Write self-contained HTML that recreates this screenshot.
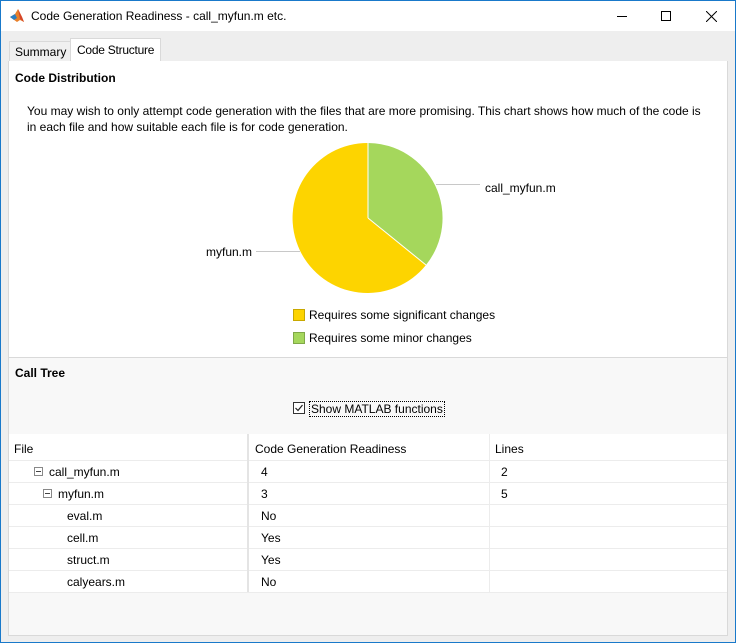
<!DOCTYPE html>
<html><head><meta charset="utf-8"><style>
*{margin:0;padding:0;box-sizing:border-box}
body{width:736px;height:643px;overflow:hidden;background:#eeeeee;font-family:"Liberation Sans",sans-serif;font-size:12px;color:#000;position:relative}
.abs{position:absolute}
#win{position:absolute;left:0;top:0;width:736px;height:643px;border:1px solid #1979ca;border-top:none}
#title{position:absolute;left:0;top:0;width:736px;height:31px;background:#fff;border-top:1px solid #1979ca}
.t{position:absolute;white-space:nowrap}
.b{font-weight:bold}
.row{position:absolute;left:9px;width:718px;height:22px;background:#fff;border-bottom:1px solid #ececec}
.vl{position:absolute;top:434px;width:1px;height:158px;background:#ececec}
</style></head><body>
<div id="title">
<svg class="abs" style="left:9px;top:7px" width="16" height="16" viewBox="0 0 16 16"><path d="M1 9 L6 6 L9 1 L13 9 L15 14 L11 12 L8 14 Z" fill="#e8802a"/><path d="M1 9 L6 6 L8 10 L5 12 Z" fill="#2a7fc4"/><path d="M9 1 L13 9 L15 14 L11 11Z" fill="#d6462a"/></svg>
<div class="t" style="left:31px;top:8px;font-size:12px">Code Generation Readiness - call_myfun.m etc.</div>
<div class="abs" style="left:617px;top:15px;width:10px;height:1px;background:#000"></div>
<div class="abs" style="left:661px;top:10px;width:10px;height:10px;border:1px solid #000"></div>
<svg class="abs" style="left:706px;top:10px" width="11" height="11"><path d="M0 0L11 11M11 0L0 11" stroke="#000" stroke-width="1"/></svg>
</div>
<!-- tabs -->
<div class="abs" style="left:9px;top:41px;width:62px;height:21px;border:1px solid #d9d9d9;border-bottom:none;background:#f0f0f0"></div>
<div class="t" style="left:15px;top:45px">Summary</div>
<div class="abs" style="left:70px;top:38px;width:91px;height:24px;border:1px solid #d9d9d9;border-bottom:none;background:#fff"></div>
<div class="t" style="left:77px;top:43px;letter-spacing:-0.25px">Code Structure</div>
<!-- panel -->
<div class="abs" style="left:8px;top:61px;width:720px;height:575px;border:1px solid #d9d9d9;background:#f8f8f8"></div>
<div class="abs" style="left:9px;top:61px;width:718px;height:297px;background:#fff;border-bottom:1px solid #d9d9d9"></div>
<div class="abs" style="left:70px;top:61px;width:90px;height:1px;background:#fff"></div>
<div class="t b" style="left:15px;top:71px">Code Distribution</div>
<div class="t" style="left:27px;top:103px;line-height:16px">You may wish to only attempt code generation with the files that are more promising. This chart shows how much of the code is<br>in each file and how suitable each file is for code generation.</div>
<svg class="abs" style="left:0;top:0" width="736" height="360">
<path d="M368 218 L368 143 A75 75 0 0 1 426 265 Z" fill="#a5d75c"/>
<path d="M368 218 L426 265 A75 75 0 1 1 368 143 Z" fill="#fdd400"/>
<path d="M368 218 L368 143 M368 218 L426 265" stroke="#fff" stroke-width="1"/>
<path d="M436 184.5 H480 M256 251.5 H300" stroke="#c8c8c8" stroke-width="1"/>
<rect x="293.5" y="309.5" width="11" height="11" fill="#fdd400" stroke="#c8a800"/>
<rect x="293.5" y="332.5" width="11" height="11" fill="#a5d75c" stroke="#80a848"/>
</svg>
<div class="t" style="left:485px;top:181px">call_myfun.m</div>
<div class="t" style="left:206px;top:245px">myfun.m</div>
<div class="t" style="left:309px;top:308px">Requires some significant changes</div>
<div class="t" style="left:309px;top:331px">Requires some minor changes</div>
<div class="t b" style="left:15px;top:366px">Call Tree</div>
<div class="abs" style="left:293px;top:402px;width:12px;height:12px;border:1px solid #333;background:#fff"></div>
<svg class="abs" style="left:294px;top:403px" width="10" height="10"><path d="M1.5 5 L4 7.5 L8.5 2" stroke="#222" fill="none" stroke-width="1.2"/></svg>
<div class="t" style="left:309px;top:401px;border:1px dotted #000;padding:0 1px">Show MATLAB functions</div>
<!-- table -->
<div class="row" style="top:434px;height:27px"></div>
<div class="t" style="left:14px;top:442px">File</div>
<div class="t" style="left:255px;top:442px">Code Generation Readiness</div>
<div class="t" style="left:495px;top:442px">Lines</div>
<div class="row" style="top:461px"></div><div class="row" style="top:483px"></div><div class="row" style="top:505px"></div>
<div class="row" style="top:527px"></div><div class="row" style="top:549px"></div><div class="row" style="top:571px"></div>
<div class="vl" style="left:247px;width:2px;background:#e4e4e4"></div><div class="vl" style="left:489px"></div>
<div class="abs" style="left:34px;top:467px;width:9px;height:9px;border:1px solid #888;background:#fff"></div><div class="abs" style="left:36px;top:471px;width:5px;height:1px;background:#444"></div>
<div class="abs" style="left:43px;top:489px;width:9px;height:9px;border:1px solid #888;background:#fff"></div><div class="abs" style="left:45px;top:493px;width:5px;height:1px;background:#444"></div>
<div class="t" style="left:49px;top:465px">call_myfun.m</div><div class="t" style="left:261px;top:465px">4</div><div class="t" style="left:501px;top:465px">2</div>
<div class="t" style="left:58px;top:487px">myfun.m</div><div class="t" style="left:261px;top:487px">3</div><div class="t" style="left:501px;top:487px">5</div>
<div class="t" style="left:67px;top:509px">eval.m</div><div class="t" style="left:261px;top:509px">No</div>
<div class="t" style="left:67px;top:531px">cell.m</div><div class="t" style="left:261px;top:531px">Yes</div>
<div class="t" style="left:67px;top:553px">struct.m</div><div class="t" style="left:261px;top:553px">Yes</div>
<div class="t" style="left:67px;top:575px">calyears.m</div><div class="t" style="left:261px;top:575px">No</div>
<div id="win"></div>
</body></html>
